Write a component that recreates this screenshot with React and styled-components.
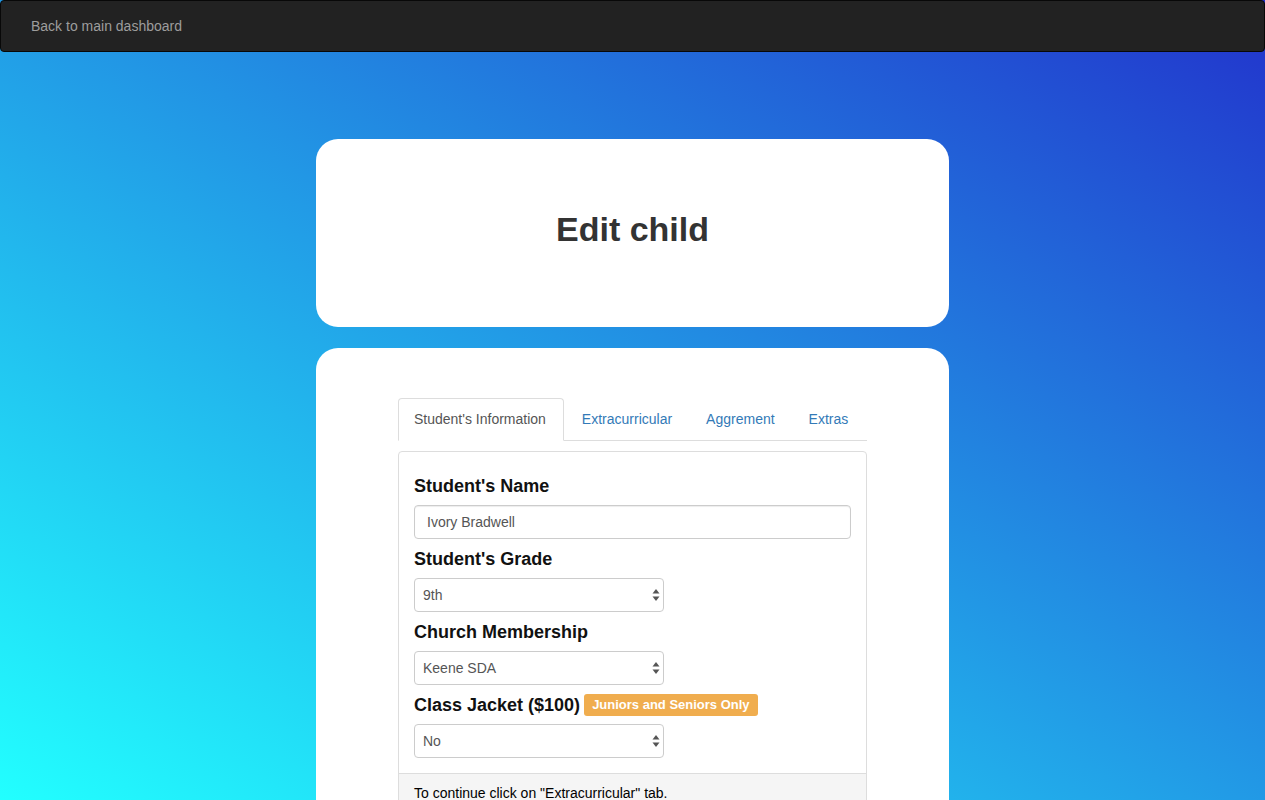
import React from "react";
import styled, { createGlobalStyle } from "styled-components";

const GlobalStyle = createGlobalStyle`
  html, body {
    margin: 0;
    padding: 0;
  }
  body {
    min-height: 100vh;
    font-family: "Liberation Sans", Arial, sans-serif;
    font-size: 14px;
    line-height: 1.42857;
    color: #333;
    background: linear-gradient(to top right, #22ffff, #2233cc) fixed;
  }
  * {
    box-sizing: border-box;
  }
`;

const Arrows = () => (
  <svg width="8" height="14" viewBox="0 0 8 14">
    <path d="M4 1 L7.5 5.5 H0.5 Z" fill="#555" />
    <path d="M4 13 L7.5 8.5 H0.5 Z" fill="#555" />
  </svg>
);

const App = () => {
  return (
    <Page>
      <GlobalStyle />
      <Navbar>
        <NavLink href="#">Back to main dashboard</NavLink>
      </Navbar>
      <Main>
        <Card>
          <Title>Edit child</Title>
        </Card>
        <Card padded>
          <Tabs>
            <Tab active>Student's Information</Tab>
            <Tab>Extracurricular</Tab>
            <Tab>Aggrement</Tab>
            <Tab>Extras</Tab>
          </Tabs>
          <Panel>
            <PanelBody>
              <Label>Student's Name</Label>
              <Input defaultValue="Ivory Bradwell" />
              <Label>Student's Grade</Label>
              <SelectWrap>
                <Select defaultValue="9th">
                  <option>9th</option>
                  <option>10th</option>
                  <option>11th</option>
                  <option>12th</option>
                </Select>
                <ArrowBox>
                  <Arrows />
                </ArrowBox>
              </SelectWrap>
              <Label>Church Membership</Label>
              <SelectWrap>
                <Select defaultValue="Keene SDA">
                  <option>Keene SDA</option>
                </Select>
                <ArrowBox>
                  <Arrows />
                </ArrowBox>
              </SelectWrap>
              <Label>
                Class Jacket ($100) <Badge>Juniors and Seniors Only</Badge>
              </Label>
              <SelectWrap>
                <Select defaultValue="No">
                  <option>No</option>
                  <option>Yes</option>
                </Select>
                <ArrowBox>
                  <Arrows />
                </ArrowBox>
              </SelectWrap>
            </PanelBody>
            <PanelFooter>
              To continue click on "Extracurricular" tab.
            </PanelFooter>
          </Panel>
        </Card>
      </Main>
    </Page>
  );
};

export default App;

const Page = styled.div`
  min-height: 100vh;
  overflow: hidden;
`;

const Navbar = styled.nav`
  display: flex;
  align-items: center;
  height: 52px;
  padding: 2px 30px 0;
  background-color: #222;
  border: 1px solid #080808;
  border-radius: 4px;
`;

const NavLink = styled.a`
  color: #9d9d9d;
  font-size: 14px;
  text-decoration: none;
`;

const Main = styled.div`
  display: flex;
  flex-direction: column;
  align-items: center;
  gap: 21px;
  padding-top: 87px;
`;

const Card = styled.div`
  width: 633px;
  min-height: 188px;
  background: #fff;
  border-radius: 22px;
  display: flex;
  flex-direction: column;
  align-items: ${(p) => (p.padded ? "stretch" : "center")};
  justify-content: ${(p) => (p.padded ? "flex-start" : "center")};
  padding: ${(p) => (p.padded ? "50px 82px 30px" : "0 0 6px")};
`;

const Title = styled.h1`
  margin: 0;
  font-size: 34px;
  font-weight: bold;
  color: #333;
  line-height: 1.1;
`;

const Tabs = styled.ul`
  display: flex;
  list-style: none;
  margin: 0;
  padding: 0;
  border-bottom: 1px solid #ddd;
`;

const Tab = styled.li`
  flex: none;
  white-space: nowrap;
  margin-bottom: -1px;
  padding: ${(p) => (p.active ? "10px 17px 11px 15px" : "10px 15px 11px")};
  font-size: 14px;
  line-height: 20px;
  border: 1px solid ${(p) => (p.active ? "#ddd" : "transparent")};
  border-bottom-color: ${(p) => (p.active ? "#fff" : "transparent")};
  border-radius: 4px 4px 0 0;
  background: ${(p) => (p.active ? "#fff" : "transparent")};
  color: ${(p) => (p.active ? "#555" : "#337ab7")};
  margin-right: 2px;
  cursor: pointer;
`;

const Panel = styled.div`
  margin-top: 10px;
  border: 1px solid #ddd;
  border-radius: 4px;
  background: #fff;
  overflow: hidden;
`;

const PanelBody = styled.div`
  padding: 15px 15px 15px;
`;

const Label = styled.h4`
  display: flex;
  align-items: center;
  gap: 4px;
  height: 20px;
  margin: 10px 0 9px;
  font-size: 18px;
  font-weight: bold;
  line-height: 20px;
  color: #111;
  &:first-child {
    margin-top: 9px;
  }
`;

const Badge = styled.span`
  display: inline-block;
  padding: 3px 8px 3px;
  background: #f0ad4e;
  color: #fff;
  font-size: 13px;
  font-weight: bold;
  line-height: 16px;
  border-radius: 3px;
`;

const Input = styled.input`
  display: block;
  width: 100%;
  height: 34px;
  padding: 6px 12px;
  font-family: inherit;
  font-size: 14px;
  color: #555;
  border: 1px solid #ccc;
  border-radius: 4px;
  box-shadow: inset 0 1px 1px rgba(0, 0, 0, 0.075);
  outline: none;
`;

const SelectWrap = styled.div`
  position: relative;
  width: 250px;
`;

const Select = styled.select`
  appearance: none;
  -webkit-appearance: none;
  display: block;
  width: 100%;
  height: 34px;
  padding: 6px 8px;
  font-family: inherit;
  font-size: 14px;
  color: #555;
  background: #fff;
  border: 1px solid #ccc;
  border-radius: 4px;
  outline: none;
`;

const ArrowBox = styled.span`
  position: absolute;
  right: 4px;
  top: 10px;
  pointer-events: none;
  display: flex;
`;

const PanelFooter = styled.div`
  padding: 10px 15px;
  background-color: #f5f5f5;
  border-top: 1px solid #ddd;
  color: #000;
  font-size: 14px;
`;
